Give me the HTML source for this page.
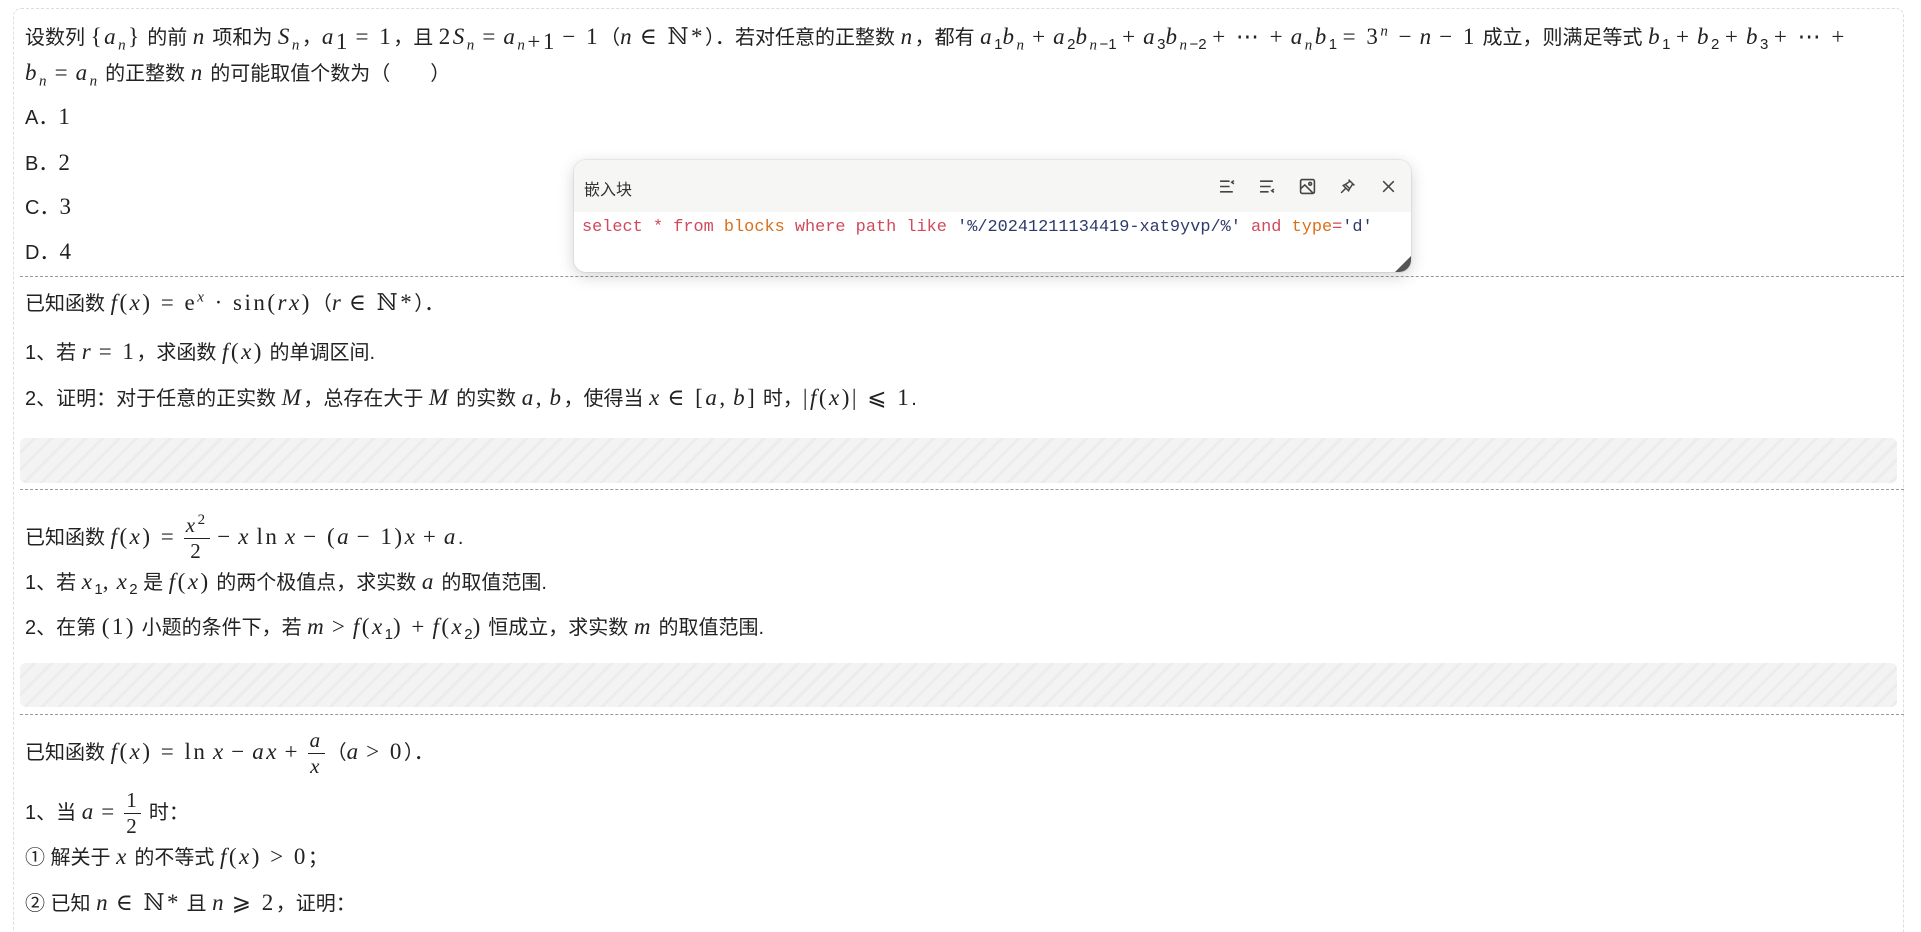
<!DOCTYPE html>
<html><head><meta charset="utf-8">
<style>
*{margin:0;padding:0;box-sizing:border-box}
html,body{width:1921px;height:932px;overflow:hidden;background:#fff}
body{font-family:"Liberation Sans","Noto Sans CJK SC",sans-serif;font-size:20px;color:#222;position:relative}
.frame{position:absolute;left:13px;top:8px;width:1891px;height:940px;border:1.5px dashed #ddd;border-radius:8px}
.ln{position:absolute;left:25px;white-space:nowrap;line-height:26px;height:26px}
.m{font-family:"Liberation Serif","DejaVu Serif",serif;font-style:italic;font-size:23px;letter-spacing:2.5px}
.r{font-family:"Liberation Serif","DejaVu Serif",serif;font-style:normal;font-size:23px;letter-spacing:2.5px}
sub,sup{font-size:15px;line-height:0}
.sep{position:absolute;left:20px;width:1884px;border-top:1px dashed #999}
.ph{position:absolute;left:20px;width:1877px;border-radius:6px;background:repeating-linear-gradient(135deg,#f3f3f3 0 9px,#ececec 9px 12px)}
.fr{display:inline-block;vertical-align:middle;text-align:center;line-height:1;margin:0 2px}
.fr span{display:block;padding:0 2px;font-size:21px}
.fr .t{border-bottom:1px solid #222;padding-bottom:2px}
.fr .b{padding-top:2px}
.pop{position:absolute;left:574px;top:160px;width:837px;height:112px;border-radius:12px;background:#fff;box-shadow:0 4px 16px rgba(0,0,0,.18),0 0 0 1px rgba(0,0,0,.06);overflow:hidden}
.ph2{height:52px;background:#f6f6f4;position:relative}
.ph2 .tt{position:absolute;left:10px;top:16px;font-size:16px;color:#333}
.ic{position:absolute;top:18px;width:17px;height:17px}
.code{position:absolute;left:8px;top:58px;font-family:"Liberation Mono",monospace;font-size:16.9px;white-space:nowrap;color:#d1495b}
.o{color:#d9701c}.s{color:#2d3a6b}
.grip{position:absolute;right:0;bottom:0;width:0;height:0;border-left:16px solid transparent;border-bottom:16px solid #555}
</style></head><body>
<div class="frame"></div>

<div class="ln" style="top:24px">设数列 <span class="r">{</span><span class="m">a<sub>n</sub></span><span class="r">}</span> 的前 <span class="m">n</span> 项和为 <span class="m">S<sub>n</sub></span>，<span class="m">a</span><sub class="r">1</sub> <span class="r">= 1</span>，且 <span class="r">2</span><span class="m">S<sub>n</sub></span> <span class="r">=</span> <span class="m">a<sub>n</sub></span><sub class="r">+1</sub> <span class="r">− 1</span>（<span class="m">n</span> <span class="r">∈ ℕ*</span>）．若对任意的正整数 <span class="m">n</span>，都有 <span class="m">a</span><sub>1</sub><span class="m">b<sub>n</sub></span> <span class="r">+</span> <span class="m">a</span><sub>2</sub><span class="m">b<sub>n</sub></span><sub>−1</sub> <span class="r">+</span> <span class="m">a</span><sub>3</sub><span class="m">b<sub>n</sub></span><sub>−2</sub> <span class="r">+ ⋯ +</span> <span class="m">a<sub>n</sub>b</span><sub>1</sub> <span class="r">= 3<sup><i>n</i></sup> −</span> <span class="m">n</span> <span class="r">− 1</span> 成立，则满足等式 <span class="m">b</span><sub>1</sub> <span class="r">+</span> <span class="m">b</span><sub>2</sub> <span class="r">+</span> <span class="m">b</span><sub>3</sub> <span class="r">+ ⋯ +</span></div>
<div class="ln" style="top:60px"><span class="m">b<sub>n</sub></span> <span class="r">=</span> <span class="m">a<sub>n</sub></span> 的正整数 <span class="m">n</span> 的可能取值个数为（　　）</div>
<div class="ln" style="top:104px">A．<span class="r">1</span></div>
<div class="ln" style="top:150px">B．<span class="r">2</span></div>
<div class="ln" style="top:194px">C．<span class="r">3</span></div>
<div class="ln" style="top:239px">D．<span class="r">4</span></div>
<div class="sep" style="top:276px"></div>

<div class="ln" style="top:290px">已知函数 <span class="m">f</span><span class="r">(</span><span class="m">x</span><span class="r">) = e<sup><i>x</i></sup> · sin(</span><span class="m">rx</span><span class="r">)</span>（<span class="m">r</span> <span class="r">∈ ℕ*</span>）．</div>
<div class="ln" style="top:339px">1、若 <span class="m">r</span> <span class="r">= 1</span>，求函数 <span class="m">f</span><span class="r">(</span><span class="m">x</span><span class="r">)</span> 的单调区间.</div>
<div class="ln" style="top:385px">2、证明：对于任意的正实数 <span class="m">M</span>，总存在大于 <span class="m">M</span> 的实数 <span class="m">a</span><span class="r">,</span> <span class="m">b</span>，使得当 <span class="m">x</span> <span class="r">∈ [</span><span class="m">a</span><span class="r">,</span> <span class="m">b</span><span class="r">]</span> 时，<span class="r">|</span><span class="m">f</span><span class="r">(</span><span class="m">x</span><span class="r">)| ⩽ 1</span>.</div>
<div class="ph" style="top:438px;height:45px"></div>
<div class="sep" style="top:489px"></div>

<div class="ln" style="top:515px">已知函数 <span class="m">f</span><span class="r">(</span><span class="m">x</span><span class="r">) =</span> <span class="fr"><span class="t m">x<sup style="font-style:normal">2</sup></span><span class="b r">2</span></span> <span class="r">−</span> <span class="m">x</span> <span class="r">ln</span> <span class="m">x</span> <span class="r">− (</span><span class="m">a</span> <span class="r">− 1)</span><span class="m">x</span> <span class="r">+</span> <span class="m">a</span>.</div>
<div class="ln" style="top:569px">1、若 <span class="m">x</span><sub>1</sub><span class="r">,</span> <span class="m">x</span><sub>2</sub> 是 <span class="m">f</span><span class="r">(</span><span class="m">x</span><span class="r">)</span> 的两个极值点，求实数 <span class="m">a</span> 的取值范围.</div>
<div class="ln" style="top:614px">2、在第 <span class="r">(1)</span> 小题的条件下，若 <span class="m">m</span> <span class="r">&gt;</span> <span class="m">f</span><span class="r">(</span><span class="m">x</span><sub>1</sub><span class="r">) +</span> <span class="m">f</span><span class="r">(</span><span class="m">x</span><sub>2</sub><span class="r">)</span> 恒成立，求实数 <span class="m">m</span> 的取值范围.</div>
<div class="ph" style="top:663px;height:44px"></div>
<div class="sep" style="top:714px"></div>

<div class="ln" style="top:730px">已知函数 <span class="m">f</span><span class="r">(</span><span class="m">x</span><span class="r">) = ln</span> <span class="m">x</span> <span class="r">−</span> <span class="m">ax</span> <span class="r">+</span> <span class="fr"><span class="t m">a</span><span class="b m">x</span></span>（<span class="m">a</span> <span class="r">&gt; 0</span>）．</div>
<div class="ln" style="top:790px">1、当 <span class="m">a</span> <span class="r">=</span> <span class="fr"><span class="t r">1</span><span class="b r">2</span></span> 时：</div>
<div class="ln" style="top:844px">① 解关于 <span class="m">x</span> 的不等式 <span class="m">f</span><span class="r">(</span><span class="m">x</span><span class="r">) &gt; 0</span>；</div>
<div class="ln" style="top:890px">② 已知 <span class="m">n</span> <span class="r">∈ ℕ*</span> 且 <span class="m">n</span> <span class="r">⩾ 2</span>，证明：</div>

<div class="pop">
  <div class="ph2">
    <div class="tt">嵌入块</div>
    <svg class="ic" style="left:645px" viewBox="0 0 16 16" fill="none" stroke="#444" stroke-width="1.5"><path d="M1 3h9M1 8h9M1 13h12M14 2.5l-2 1.5 2 1.5"/></svg>
    <svg class="ic" style="left:685px" viewBox="0 0 16 16" fill="none" stroke="#444" stroke-width="1.5"><path d="M1 3h12M1 8h10M1 13h8M14 10.5l-2 1.5 2 1.5"/></svg>
    <svg class="ic" style="left:725px" viewBox="0 0 16 16" fill="none" stroke="#444" stroke-width="1.5"><rect x="1.5" y="1.5" width="13" height="13" rx="1.5"/><circle cx="10.5" cy="5.5" r="1.3"/><path d="M1.5 10l4-3.5 8 8"/></svg>
    <svg class="ic" style="left:765px" viewBox="0 0 16 16" fill="none" stroke="#444" stroke-width="1.4"><path d="M9 1.5l5.5 5.5M10.5 3l-4.5 3 4 4 3-4.5M6 6l-2 1 5 5 1-2M6.5 9.5L2 14"/></svg>
    <svg class="ic" style="left:806px" viewBox="0 0 16 16" fill="none" stroke="#444" stroke-width="1.4"><path d="M3 3l10 10M13 3L3 13"/></svg>
  </div>
  <div class="code">select * from <span class="o">blocks</span> where path like <span class="s">'%/20241211134419-xat9yvp/%'</span> and <span class="o">type</span>=<span class="s">'d'</span></div>
  <div class="grip"></div>
</div>
</body></html>
